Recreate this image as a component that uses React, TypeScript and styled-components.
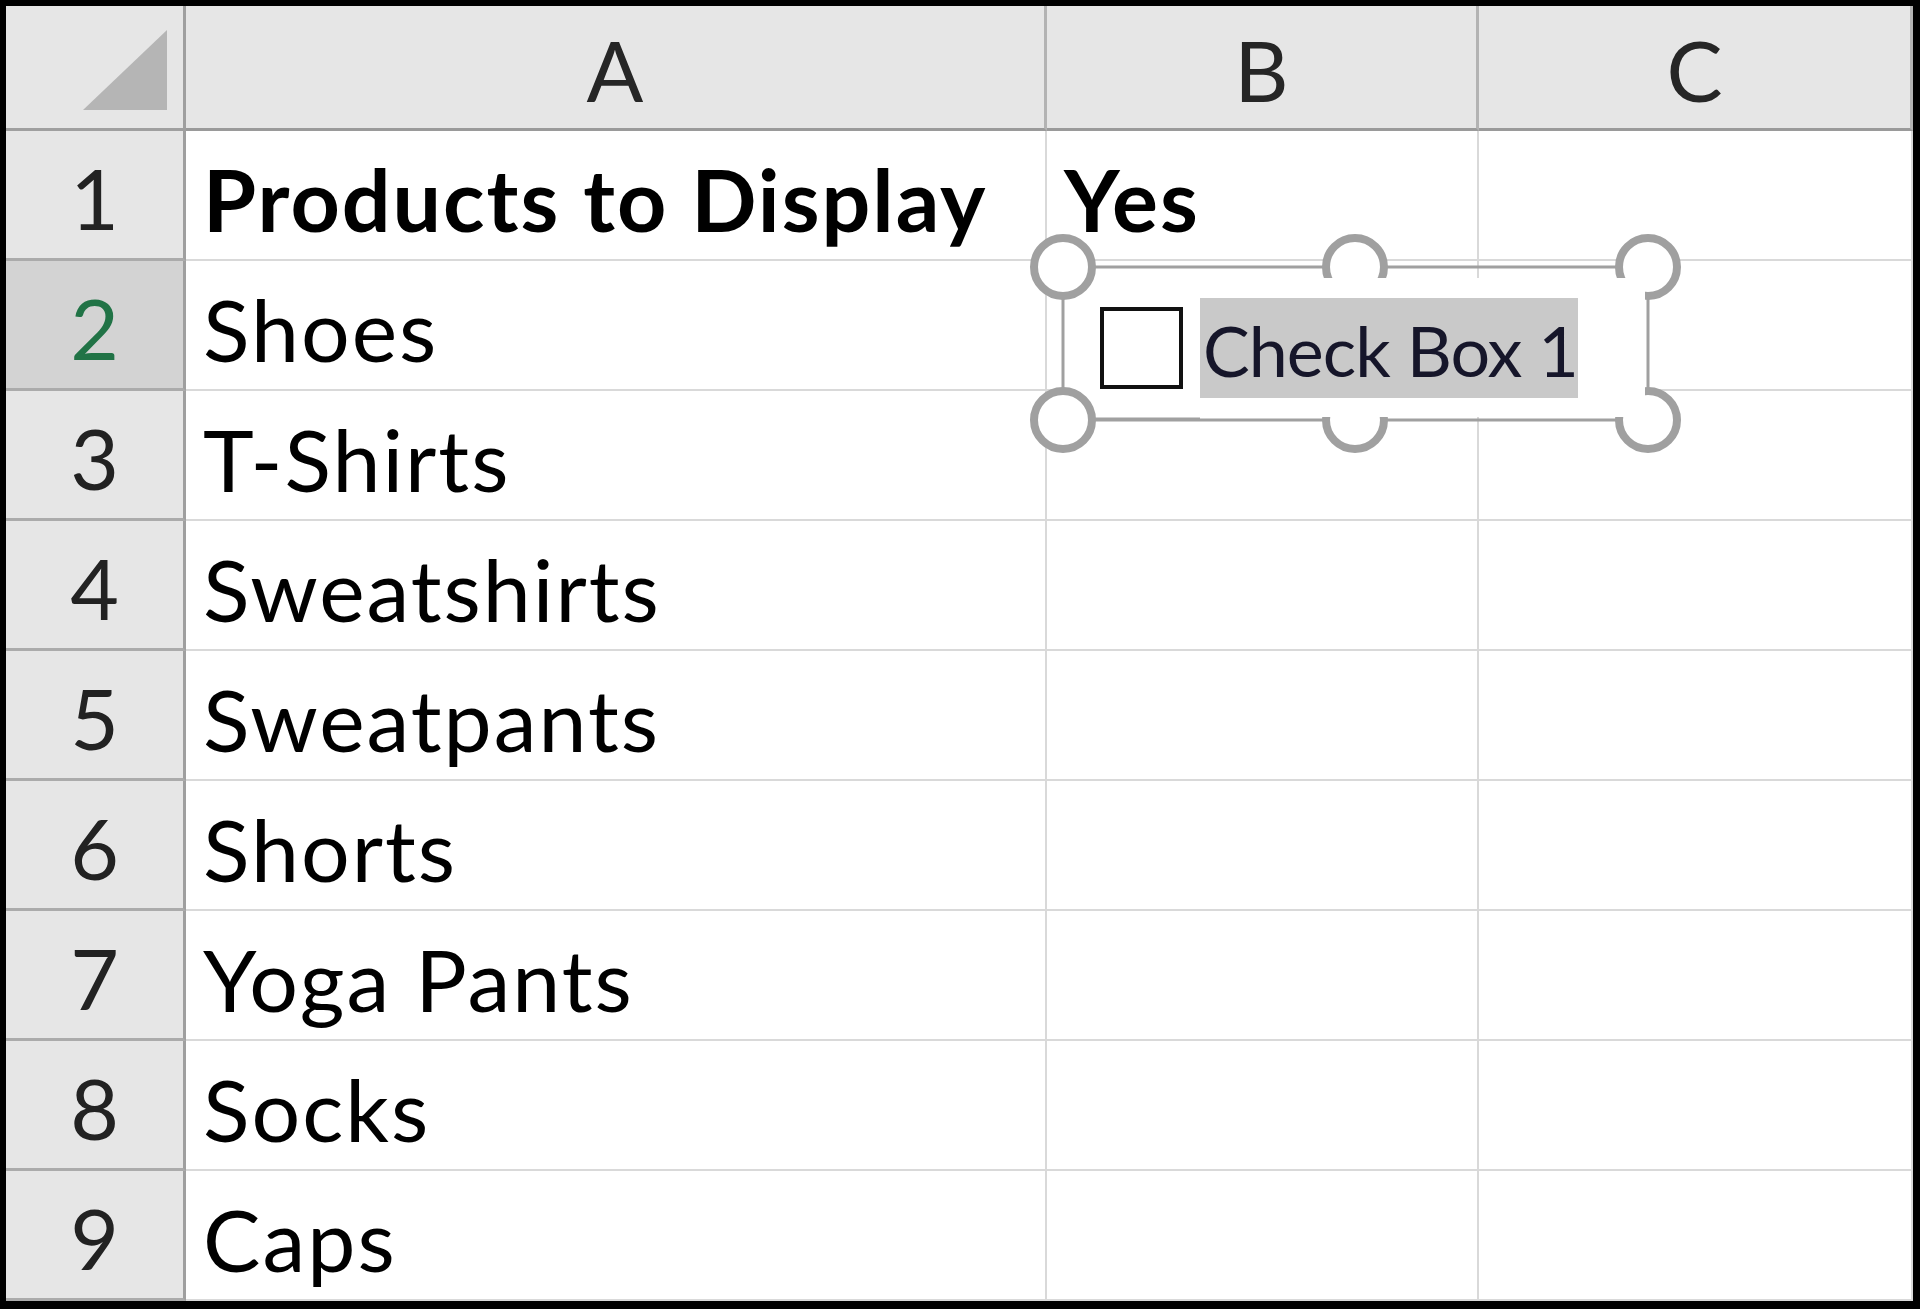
import React from 'react';
import styled, { createGlobalStyle } from 'styled-components';

const GlobalStyle = createGlobalStyle`
  html, body {
    margin: 0;
    padding: 0;
    background: #ffffff;
  }
  * {
    box-sizing: border-box;
  }
`;

const columns = ['A', 'B', 'C'];

const rows = [
  ['Products to Display', 'Yes', ''],
  ['Shoes', '', ''],
  ['T-Shirts', '', ''],
  ['Sweatshirts', '', ''],
  ['Sweatpants', '', ''],
  ['Shorts', '', ''],
  ['Yoga Pants', '', ''],
  ['Socks', '', ''],
  ['Caps', '', ''],
];

const SELECTED_ROW = 2;
const HANDLE = '#a0a0a0';

function App() {
  return (
    <>
      <GlobalStyle />
      <Page>
        <Sheet>
          <Corner>
            <SelectAll />
          </Corner>
          {columns.map(col => (
            <ColumnHeader key={col}>{col}</ColumnHeader>
          ))}
          {rows.map((cells, i) => (
            <React.Fragment key={i}>
              <RowHeader $selected={i + 1 === SELECTED_ROW}>{i + 1}</RowHeader>
              {cells.map((value, j) => (
                <Cell key={j} $bold={i === 0}>
                  {value}
                </Cell>
              ))}
            </React.Fragment>
          ))}
        </Sheet>

        <CheckBoxControl>
          <Frame width="680" height="250" viewBox="0 0 680 250">
            <g stroke={HANDLE} strokeWidth="3">
              <line x1="43" y1="47" x2="628" y2="47" />
              <line x1="43" y1="47" x2="43" y2="200" />
              <line x1="628" y1="47" x2="628" y2="200" />
              <line x1="43" y1="200" x2="628" y2="200" />
            </g>
            <g fill="#fff" stroke={HANDLE} strokeWidth="8">
              <circle cx="335" cy="47" r="29" />
              <circle cx="628" cy="47" r="29" />
              <circle cx="335" cy="200" r="29" />
              <circle cx="628" cy="200" r="29" />
            </g>
            <rect x="55" y="58" width="570" height="139" fill="#fff" />
            <line x1="43" y1="199" x2="180" y2="199" stroke={HANDLE} strokeWidth="3" />
            <g fill="#fff" stroke={HANDLE} strokeWidth="8">
              <circle cx="43" cy="47" r="29" />
              <circle cx="43" cy="200" r="29" />
            </g>
          </Frame>
          <ControlBody>
            <Box />
            <Caption>Check Box 1</Caption>
          </ControlBody>
        </CheckBoxControl>
      </Page>
    </>
  );
}

export default App;

const Page = styled.div`
  position: relative;
  width: 1920px;
  height: 1309px;
  overflow: hidden;
`;

const Sheet = styled.div`
  width: 1920px;
  height: 1309px;
  display: grid;
  grid-template-columns: 180px 861px 432px 1fr;
  grid-template-rows: 125px repeat(9, 130px);
  border-style: solid;
  border-color: #000;
  border-width: 6px 7px 8px 6px;
  background: #fff;
  font-family: Lato, 'Liberation Sans', sans-serif;
`;

const Corner = styled.div`
  background: #e6e6e6;
  border-right: 3px solid #9f9f9f;
  border-bottom: 3px solid #9f9f9f;
  display: flex;
  justify-content: flex-end;
  align-items: flex-end;
  padding: 0 16px 18px 0;
`;

const SelectAll = styled.div`
  width: 84px;
  height: 80px;
  background: #b5b5b5;
  clip-path: polygon(100% 0, 100% 100%, 0 100%);
`;

const ColumnHeader = styled.div`
  background: #e6e6e6;
  border-right: 3px solid #b3b3b3;
  border-bottom: 3px solid #9a9a9a;
  display: flex;
  align-items: center;
  justify-content: center;
  padding-top: 4px;
  font-size: 84px;
  color: #262626;
`;

const RowHeader = styled.div<{ $selected?: boolean }>`
  background: ${p => (p.$selected ? '#d3d3d3' : '#e6e6e6')};
  border-right: 3px solid #9f9f9f;
  border-bottom: 3px solid #ababab;
  display: flex;
  align-items: center;
  justify-content: center;
  padding-top: 6px;
  font-size: 84px;
  color: ${p => (p.$selected ? '#217346' : '#222')};
`;

const Cell = styled.div<{ $bold?: boolean }>`
  border-right: 2px solid #d9d9d9;
  border-bottom: 2px solid #d9d9d9;
  display: flex;
  align-items: center;
  padding: 6px 0 0 17px;
  font-size: 86px;
  font-weight: ${p => (p.$bold ? 700 : 400)};
  letter-spacing: 2px;
  color: #000;
  white-space: nowrap;
  overflow: visible;
`;

const CheckBoxControl = styled.div`
  position: absolute;
  left: 1020px;
  top: 220px;
  width: 680px;
  height: 250px;
`;

const Frame = styled.svg`
  position: absolute;
  left: 0;
  top: 0;
  display: block;
`;

const ControlBody = styled.div`
  position: absolute;
  left: 80px;
  top: 78px;
  display: flex;
  align-items: center;
  gap: 17px;
`;

const Box = styled.div`
  width: 83px;
  height: 82px;
  border: 4px solid #111;
  background: #fff;
`;

const Caption = styled.div`
  width: 378px;
  height: 100px;
  background: #c9c9c9;
  display: flex;
  align-items: center;
  padding: 4px 0 0 3px;
  font-family: Lato, 'Liberation Sans', sans-serif;
  font-size: 70px;
  letter-spacing: -1px;
  color: #16162a;
  white-space: nowrap;
`;
